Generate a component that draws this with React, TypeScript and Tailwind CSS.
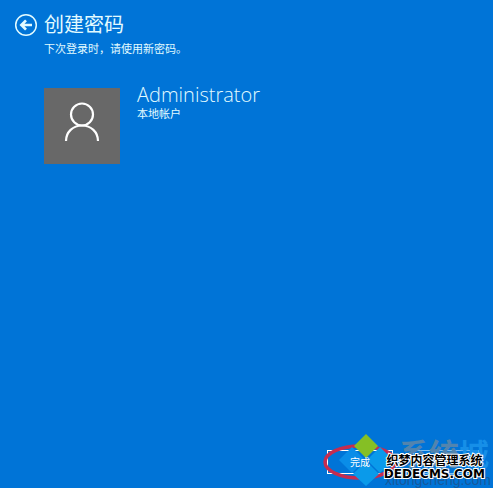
import React from 'react';

const BackIcon: React.FC<{ className?: string }> = ({ className = '' }) => (
  <svg className={className} viewBox="0 0 24 24" fill="none" stroke="currentColor" aria-hidden="true">
    <circle cx="12" cy="12" r="10.3" strokeWidth="1.5" />
    <path d="M18 12H8M12 7.4L7.4 12l4.6 4.6" strokeWidth="2.7" />
  </svg>
);

const UserIcon: React.FC<{ className?: string }> = ({ className = '' }) => (
  <svg className={className} viewBox="0 0 36 40" fill="none" stroke="currentColor" strokeWidth="2.2" aria-hidden="true">
    <circle cx="18" cy="12.5" r="11" />
    <path d="M2 39C2 30 9 23.5 18 23.5S34 30 34 39" />
  </svg>
);

const DiamondLogo: React.FC<{ className?: string }> = ({ className = '' }) => (
  <svg className={className} viewBox="0 0 54 52" aria-hidden="true">
    <path d="M27 0l12 12-12 12-12-12z" fill="#85bf25" />
    <path d="M13 13l13 13-13 13L0 26z" fill="#0a8de8" />
    <path d="M41 13l13 13-13 13-13-13z" fill="#0a9aea" />
    <path d="M27 27l13 13-13 12-13-12z" fill="#0a9aea" />
  </svg>
);

const Watermark: React.FC = () => (
  <div className="pointer-events-none absolute right-1 bottom-0 w-[104px]">
    <p className="text-right text-[30px] leading-9 font-bold text-[#5284ae]">
      系统<span className="text-[#168fe8]">城</span>
    </p>
    <p className="text-right font-['Liberation_Sans'] text-sm leading-4 text-[#17599c]">xitongcheng.com</p>
    <div className="absolute right-1 bottom-2 text-center font-bold whitespace-nowrap text-black [paint-order:stroke_fill] [-webkit-text-stroke:2px_white]">
      <p className="text-xs leading-[14px]">织梦内容管理系统</p>
      <p className="font-['DejaVu_Sans'] text-xs leading-3">DEDECMS.COM</p>
    </div>
  </div>
);

const App: React.FC = () => {
  return (
    <main
      lang="zh-CN"
      className="relative flex min-h-screen flex-col overflow-hidden bg-[#0074d7] font-['Open_Sans','Noto_Sans_CJK_SC',sans-serif] text-[#e2fbff]"
    >
      <header className="flex gap-1.5 px-3.5 pt-[13px]">
        <button type="button" aria-label="返回" className="h-6 w-6 shrink-0">
          <BackIcon className="h-6 w-6" />
        </button>
        <div>
          <h1 className="text-xl leading-6">创建密码</h1>
          <p className="mt-1 text-[11px] leading-4">下次登录时，请使用新密码。</p>
        </div>
      </header>

      <section className="mt-[31px] flex gap-[17px] px-11">
        <div className="flex h-[76px] w-[76px] shrink-0 items-center justify-center bg-[#686868] pb-2 text-white">
          <UserIcon className="h-10 w-9" />
        </div>
        <div>
          <h2 className="text-xl leading-[14px] font-light">Administrator</h2>
          <p className="mt-0.5 text-[11px] leading-5">本地帐户</p>
        </div>
      </section>

      <footer className="mt-auto flex justify-end gap-5 px-3.5 pb-3.5">
        <div className="relative">
          <button type="button" className="block h-6 w-[66px] border border-white text-[10px] text-white">
            <span className="relative z-10">完成</span>
          </button>
          <svg className="pointer-events-none absolute -top-1.5 -left-1 h-9 w-[78px]" viewBox="0 0 78 36" fill="none" aria-hidden="true">
            <ellipse cx="37" cy="18" rx="35" ry="16" stroke="#c52c50" strokeWidth="3.5" />
          </svg>
          <DiamondLogo className="pointer-events-none absolute -top-4 left-3 h-[52px] w-[54px]" />
        </div>
        <button type="button" className="h-6 w-[66px] border border-[#7fc0f2]" aria-label="取消" />
      </footer>

      <Watermark />
    </main>
  );
};

export default App;
